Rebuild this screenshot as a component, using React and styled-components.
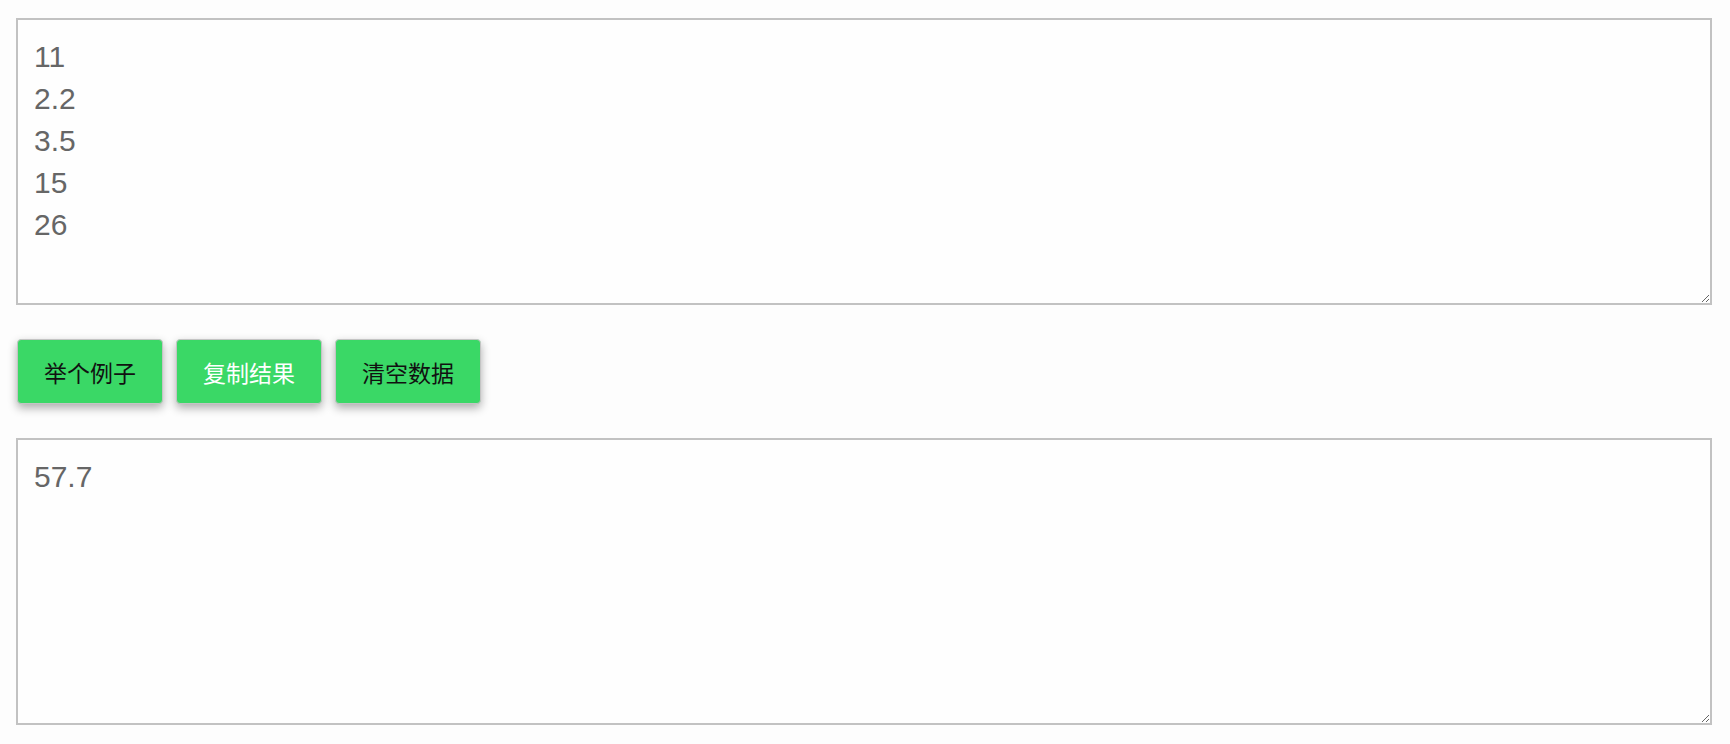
import React, { useState } from 'react';
import styled, { createGlobalStyle } from 'styled-components';

const GlobalStyle = createGlobalStyle`
  html, body {
    margin: 0;
    padding: 0;
    background: #fdfdfd;
  }
`;

const Page = styled.div`
  padding: 18px 18px 0 16px;
  font-family: "Liberation Sans", "Noto Sans CJK SC", sans-serif;
`;

const Area = styled.textarea`
  display: block;
  box-sizing: border-box;
  width: 100%;
  height: 287px;
  margin: 0;
  padding: 16px;
  border: 2px solid #c2c2c2;
  background: #fefefe;
  color: #666;
  font-family: "Liberation Sans", "Noto Sans CJK SC", sans-serif;
  font-size: 30px;
  line-height: 42px;
  outline: none;
  resize: vertical;
`;

const Toolbar = styled.div`
  display: flex;
  gap: 13px;
  padding: 34px 0 34px 1px;
`;

const Button = styled.button`
  box-sizing: border-box;
  width: 146px;
  height: 65px;
  padding: 0;
  border: 1px solid #c4c4c4;
  border-radius: 4px;
  background: #3ad866;
  color: ${p => (p.light ? '#fff' : '#111')};
  font-family: "Noto Sans CJK SC", sans-serif;
  font-size: 23px;
  box-shadow: 0 4px 10px rgba(0, 0, 0, 0.32);
  cursor: pointer;
`;

const sample = '11\n2.2\n3.5\n15\n26';

export default function App() {
  const [input, setInput] = useState(sample);
  const total = input
    .split('\n')
    .map(s => parseFloat(s))
    .filter(n => !isNaN(n))
    .reduce((a, b) => a + b, 0);
  const result = input.trim() ? String(Math.round(total * 100) / 100) : '';

  return (
    <>
      <GlobalStyle />
      <Page>
        <Area value={input} onChange={e => setInput(e.target.value)} />
        <Toolbar>
          <Button onClick={() => setInput(sample)}>举个例子</Button>
          <Button light onClick={() => navigator.clipboard && navigator.clipboard.writeText(result)}>复制结果</Button>
          <Button onClick={() => setInput('')}>清空数据</Button>
        </Toolbar>
        <Area value={result} readOnly />
      </Page>
    </>
  );
}
